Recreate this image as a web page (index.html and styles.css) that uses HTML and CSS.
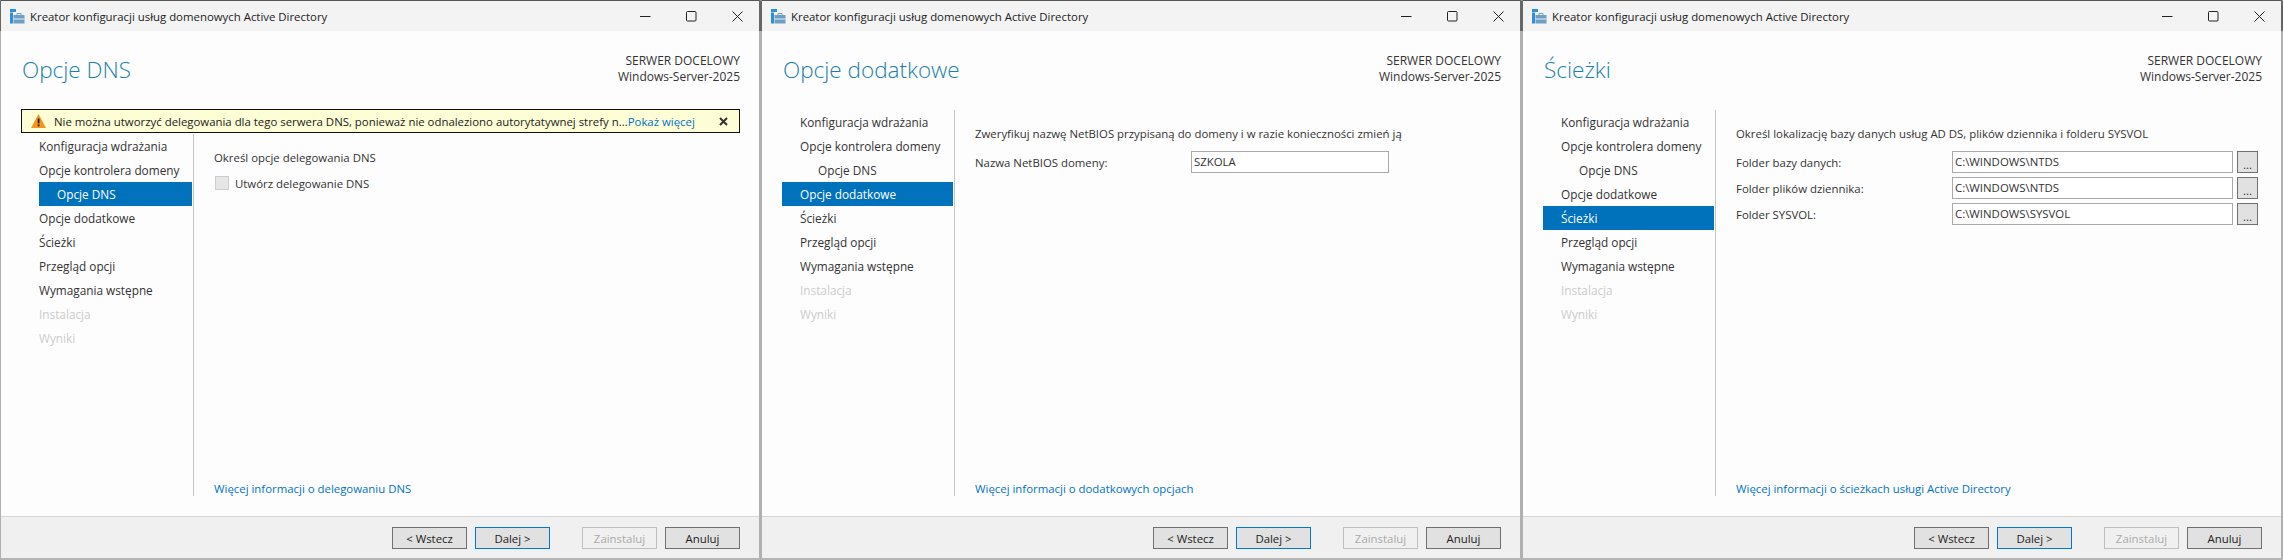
FILE: index.html
```html
<!DOCTYPE html>
<html>
  <head>
    <meta charset="utf-8">
    <title>Kreator konfiguracji usług domenowych Active Directory</title>
    <link rel="stylesheet" href="styles.css">
  </head>
  <body>
    <div class="desktop">

      <section class="wizard">
        <div class="titlebar">
          <svg class="app-icon" viewBox="0 0 15 15">
            <rect x="0" y="0" width="6" height="3" fill="#2f8fd8"/>
            <rect x="0" y="3.5" width="3" height="11" fill="#2f8fd8"/>
            <rect x="3.5" y="6" width="11" height="8.5" fill="#6f9ec4"/>
            <rect x="3.5" y="9.5" width="11" height="1" fill="#e8f0f6"/>
            <path d="M7 6V4.5h4V6" fill="none" stroke="#6f9ec4"/>
          </svg>
          <span class="titlebar-text">Kreator konfiguracji usług domenowych Active Directory</span>
          <div class="window-controls">
            <svg viewBox="0 0 11 11"><path d="M0 5.5h10.5" stroke="#222" fill="none"/></svg>
            <svg viewBox="0 0 11 11"><rect x="0.5" y="0.5" width="9.5" height="9.5" rx="1" stroke="#222" fill="none"/></svg>
            <svg viewBox="0 0 11 11"><path d="M0.5 0.5l10 10M10.5 0.5l-10 10" stroke="#222" fill="none"/></svg>
          </div>
        </div>
        <div class="wizard-body">
          <header class="wizard-head">
            <h1>Opcje DNS</h1>
            <div class="target">SERWER DOCELOWY<br>Windows-Server-2025</div>
          </header>
          <div class="warning">
            <svg class="warning-icon" viewBox="0 0 15 14">
              <path d="M7.5 0L15 14H0z" fill="#f7941d"/>
              <rect x="6.7" y="4.5" width="1.8" height="5" fill="#222"/>
              <rect x="6.7" y="10.5" width="1.8" height="1.8" fill="#222"/>
            </svg>
            <span class="warning-text">Nie można utworzyć delegowania dla tego serwera DNS, ponieważ nie odnaleziono autorytatywnej strefy n...</span>
            <a class="warning-link">Pokaż więcej</a>
            <svg class="warning-close" viewBox="0 0 9 9"><path d="M1 1l7 7M8 1L1 8" stroke="#333" stroke-width="2" fill="none"/></svg>
          </div>
          <div class="wizard-main">
            <ul class="steps">
              <li>Konfiguracja wdrażania</li>
              <li>Opcje kontrolera domeny</li>
              <li class="sub active">Opcje DNS</li>
              <li>Opcje dodatkowe</li>
              <li>Ścieżki</li>
              <li>Przegląd opcji</li>
              <li>Wymagania wstępne</li>
              <li class="off">Instalacja</li>
              <li class="off">Wyniki</li>
            </ul>
            <div class="pane">
              <p class="pane-title">Określ opcje delegowania DNS</p>
              <div class="check-row"><span class="checkbox"></span>Utwórz delegowanie DNS</div>
              <a class="more">Więcej informacji o delegowaniu DNS</a>
            </div>
          </div>
        </div>
        <div class="wizard-foot">
          <button class="btn">&lt; Wstecz</button>
          <button class="btn btn-default">Dalej &gt;</button>
          <button class="btn btn-off">Zainstaluj</button>
          <button class="btn">Anuluj</button>
        </div>
      </section>

      <section class="wizard">
        <div class="titlebar">
          <svg class="app-icon" viewBox="0 0 15 15">
            <rect x="0" y="0" width="6" height="3" fill="#2f8fd8"/>
            <rect x="0" y="3.5" width="3" height="11" fill="#2f8fd8"/>
            <rect x="3.5" y="6" width="11" height="8.5" fill="#6f9ec4"/>
            <rect x="3.5" y="9.5" width="11" height="1" fill="#e8f0f6"/>
            <path d="M7 6V4.5h4V6" fill="none" stroke="#6f9ec4"/>
          </svg>
          <span class="titlebar-text">Kreator konfiguracji usług domenowych Active Directory</span>
          <div class="window-controls">
            <svg viewBox="0 0 11 11"><path d="M0 5.5h10.5" stroke="#222" fill="none"/></svg>
            <svg viewBox="0 0 11 11"><rect x="0.5" y="0.5" width="9.5" height="9.5" rx="1" stroke="#222" fill="none"/></svg>
            <svg viewBox="0 0 11 11"><path d="M0.5 0.5l10 10M10.5 0.5l-10 10" stroke="#222" fill="none"/></svg>
          </div>
        </div>
        <div class="wizard-body">
          <header class="wizard-head">
            <h1>Opcje dodatkowe</h1>
            <div class="target">SERWER DOCELOWY<br>Windows-Server-2025</div>
          </header>
          <div class="wizard-main">
            <ul class="steps">
              <li>Konfiguracja wdrażania</li>
              <li>Opcje kontrolera domeny</li>
              <li class="sub">Opcje DNS</li>
              <li class="active">Opcje dodatkowe</li>
              <li>Ścieżki</li>
              <li>Przegląd opcji</li>
              <li>Wymagania wstępne</li>
              <li class="off">Instalacja</li>
              <li class="off">Wyniki</li>
            </ul>
            <div class="pane">
              <p class="pane-title">Zweryfikuj nazwę NetBIOS przypisaną do domeny i w razie konieczności zmień ją</p>
              <div class="field-row">
                <label class="field-label">Nazwa NetBIOS domeny:</label>
                <div class="field field-short">SZKOLA</div>
              </div>
              <a class="more">Więcej informacji o dodatkowych opcjach</a>
            </div>
          </div>
        </div>
        <div class="wizard-foot">
          <button class="btn">&lt; Wstecz</button>
          <button class="btn btn-default">Dalej &gt;</button>
          <button class="btn btn-off">Zainstaluj</button>
          <button class="btn">Anuluj</button>
        </div>
      </section>

      <section class="wizard">
        <div class="titlebar">
          <svg class="app-icon" viewBox="0 0 15 15">
            <rect x="0" y="0" width="6" height="3" fill="#2f8fd8"/>
            <rect x="0" y="3.5" width="3" height="11" fill="#2f8fd8"/>
            <rect x="3.5" y="6" width="11" height="8.5" fill="#6f9ec4"/>
            <rect x="3.5" y="9.5" width="11" height="1" fill="#e8f0f6"/>
            <path d="M7 6V4.5h4V6" fill="none" stroke="#6f9ec4"/>
          </svg>
          <span class="titlebar-text">Kreator konfiguracji usług domenowych Active Directory</span>
          <div class="window-controls">
            <svg viewBox="0 0 11 11"><path d="M0 5.5h10.5" stroke="#222" fill="none"/></svg>
            <svg viewBox="0 0 11 11"><rect x="0.5" y="0.5" width="9.5" height="9.5" rx="1" stroke="#222" fill="none"/></svg>
            <svg viewBox="0 0 11 11"><path d="M0.5 0.5l10 10M10.5 0.5l-10 10" stroke="#222" fill="none"/></svg>
          </div>
        </div>
        <div class="wizard-body">
          <header class="wizard-head">
            <h1>Ścieżki</h1>
            <div class="target">SERWER DOCELOWY<br>Windows-Server-2025</div>
          </header>
          <div class="wizard-main">
            <ul class="steps">
              <li>Konfiguracja wdrażania</li>
              <li>Opcje kontrolera domeny</li>
              <li class="sub">Opcje DNS</li>
              <li>Opcje dodatkowe</li>
              <li class="active">Ścieżki</li>
              <li>Przegląd opcji</li>
              <li>Wymagania wstępne</li>
              <li class="off">Instalacja</li>
              <li class="off">Wyniki</li>
            </ul>
            <div class="pane">
              <p class="pane-title">Określ lokalizację bazy danych usług AD DS, plików dziennika i folderu SYSVOL</p>
              <div class="field-row">
                <label class="field-label">Folder bazy danych:</label>
                <div class="field field-long">C:\WINDOWS\NTDS</div>
                <button class="browse">...</button>
              </div>
              <div class="field-row">
                <label class="field-label">Folder plików dziennika:</label>
                <div class="field field-long">C:\WINDOWS\NTDS</div>
                <button class="browse">...</button>
              </div>
              <div class="field-row">
                <label class="field-label">Folder SYSVOL:</label>
                <div class="field field-long">C:\WINDOWS\SYSVOL</div>
                <button class="browse">...</button>
              </div>
              <a class="more">Więcej informacji o ścieżkach usługi Active Directory</a>
            </div>
          </div>
        </div>
        <div class="wizard-foot">
          <button class="btn">&lt; Wstecz</button>
          <button class="btn btn-default">Dalej &gt;</button>
          <button class="btn btn-off">Zainstaluj</button>
          <button class="btn">Anuluj</button>
        </div>
      </section>

    </div>
  </body>
</html>
```

FILE: styles.css
```css
* {
  box-sizing: border-box;
}
body {
  margin: 0;
  font-family: "Open Sans", "Noto Sans", sans-serif;
  font-size: 11.4px;
  color: #333;
  background-color: #555;
}
.desktop {
  display: grid;
  grid-template-columns: repeat(3, 761px);
  height: 560px;
  overflow: hidden;
}
.wizard {
  display: flex;
  flex-direction: column;
  height: 560px;
  border-left: 1px solid #b0b0b0;
  border-right: 2px solid #b0b0b0;
  border-bottom: 2px solid #b5b5b5;
  border-top: 1px solid #555;
  background-color: #fdfdfd;
}
.titlebar {
  display: flex;
  align-items: center;
  height: 30px;
  flex-shrink: 0;
  padding-left: 9px;
  background-color: #f3f3f3;
  color: #222;
  box-shadow: -1px 0 0 #666, 2px 0 0 #666;
}
.app-icon {
  width: 15px;
  height: 15px;
  margin-right: 5px;
}
.window-controls {
  display: flex;
  gap: 35px;
  margin-left: auto;
  margin-right: 16px;
}
.window-controls svg {
  width: 11px;
  height: 11px;
  display: block;
}
.wizard-body {
  flex: 1;
  display: flex;
  flex-direction: column;
  min-height: 0;
}
.wizard-head {
  display: flex;
  justify-content: space-between;
  height: 79px;
  flex-shrink: 0;
  padding: 21px 19px 0 21px;
}
.wizard-head h1 {
  margin: 3px 0 0;
  font-size: 22.5px;
  font-weight: 300;
  line-height: 30px;
  color: #1b7fa8;
}
.target {
  font-size: 12px;
  text-align: right;
  line-height: 16px;
  padding-top: 1px;
  color: #333;
}
.warning {
  display: flex;
  align-items: center;
  height: 24px;
  flex-shrink: 0;
  margin: -1px 19px 1px 20px;
  padding-left: 9px;
  border: 1px solid #111;
  background-color: #fefed6;
  color: #222;
}
.warning-icon {
  width: 15px;
  height: 14px;
  margin-right: 8px;
}
.warning-text {
  white-space: nowrap;
}
.warning-link {
  color: #0072c6;
}
.warning-close {
  width: 9px;
  height: 9px;
  margin-left: auto;
  margin-right: 11px;
}
.wizard-main {
  display: flex;
  flex: 1;
  min-height: 0;
  margin-bottom: 20px;
}
.steps {
  list-style: none;
  margin: 0;
  padding: 0 0 0 20px;
  width: 191px;
  flex-shrink: 0;
  font-size: 11.8px;
}
.steps li {
  height: 24px;
  line-height: 25px;
  padding-left: 18px;
}
.steps li.sub {
  margin-left: 18px;
}
.steps li.active {
  background-color: #0072bc;
  color: #fff;
}
.steps li.off {
  color: #ccc;
}
.pane {
  flex: 1;
  display: flex;
  flex-direction: column;
  margin-left: 1px;
  padding: 14px 0 0 20px;
  border-left: 1px solid #c4c4c4;
}
.pane-title {
  margin: 0 0 7px;
  line-height: 20px;
}
.check-row {
  display: flex;
  align-items: center;
  height: 16px;
  margin-left: 1px;
}
.checkbox {
  width: 14px;
  height: 14px;
  margin-right: 6px;
  background-color: #e6e6e6;
  border: 1px solid #ccc;
}
.field-row {
  display: flex;
  align-items: center;
  height: 22px;
  margin-bottom: 4px;
}
.field-label {
  width: 216px;
  flex-shrink: 0;
}
.field {
  height: 22px;
  line-height: 20px;
  padding-left: 2px;
  background-color: #fff;
  border: 1px solid #aaa;
}
.field-short {
  width: 198px;
}
.field-long {
  width: 281px;
}
.browse {
  width: 21px;
  height: 22px;
  margin-left: 4px;
  padding: 4px 0 0;
  font: inherit;
  background-color: #e1e1e1;
  border: 1px solid #707070;
  color: #333;
}
.more {
  margin-top: auto;
  line-height: 14px;
  color: #0072c6;
}
.wizard-foot {
  display: flex;
  align-items: center;
  justify-content: flex-end;
  height: 42px;
  flex-shrink: 0;
  padding: 1px 19px 0 0;
  background-color: #f0f0f0;
  border-top: 1px solid #d5d5d5;
}
.btn {
  width: 75px;
  height: 22px;
  margin-left: 8px;
  padding: 0;
  font: inherit;
  color: #222;
  background-color: #e1e1e1;
  border: 1px solid #707070;
}
.btn-default {
  border-color: #0078d7;
}
.btn-off {
  margin-left: 32px;
  color: #aaa;
  background-color: #f0f0f0;
  border-color: #bfbfbf;
}
```
